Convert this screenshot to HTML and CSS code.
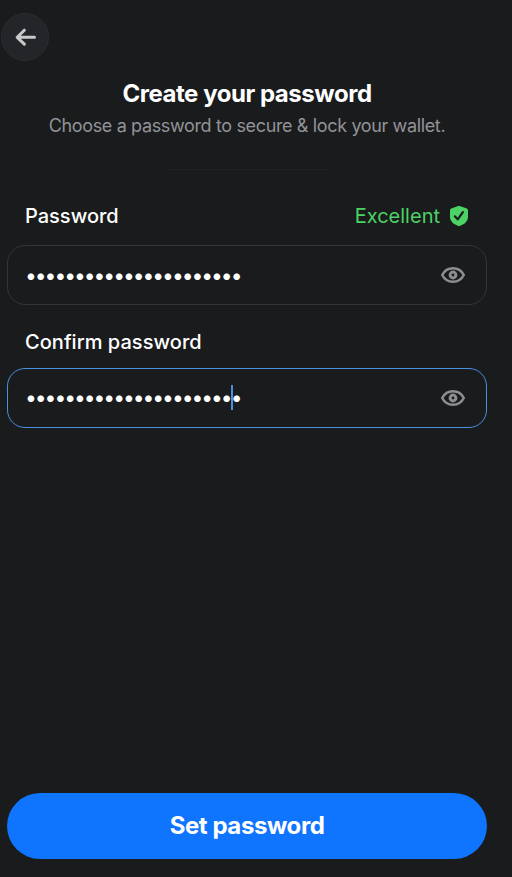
FILE: index.html
```html
<!DOCTYPE html>
<html lang="en">
<head>
<meta charset="utf-8">
<title>Create your password</title>
<link rel="stylesheet" href="styles.css">
</head>
<body>
<main class="screen">
  <button class="back" aria-label="Back">
    <svg width="22" height="18" viewBox="0 0 22 18"><path d="M19.5 9.3H2.500M9.300 2.200L2.200 9.300L9.300 16.200"/></svg>
  </button>
  <header class="intro">
    <h1 class="title">Create your password</h1>
    <p class="subtitle">Choose a password to secure &amp; lock your wallet.</p>
    <div class="divider"></div>
  </header>
  <div class="label-row">
    <span class="label">Password</span>
    <span class="strength">Excellent
      <svg width="20" height="22" viewBox="0 0 20 22"><path class="shield" d="M10 .8L17.800 3.500Q19 4 19 5.200V11.500C19 17 14.500 19.800 10 21.200C5.500 19.800 1 17 1 11.500V5.200Q1 4 2.200 3.500Z"/><path class="check" d="M5.800 11.300L8.700 14.300L13.900 7.100"/></svg>
    </span>
  </div>
  <div class="field first">
    <span class="dots">••••••••••••••••••••••</span>
    <svg class="eye" width="26" height="18" viewBox="0 0 26 18"><path d="M2.200 9C4.500 4.500 8.500 2.300 13 2.300S21.500 4.500 23.800 9C21.500 13.500 17.500 15.700 13 15.700S4.500 13.500 2.200 9Z"/><circle cx="13" cy="9" r="2.900"/></svg>
  </div>
  <div class="label-row confirm">
    <span class="label">Confirm password</span>
  </div>
  <div class="field focused">
    <span class="dots">••••••••••••••••••••••<i class="caret"></i></span>
    <svg class="eye" width="26" height="18" viewBox="0 0 26 18"><path d="M2.200 9C4.500 4.500 8.500 2.300 13 2.300S21.500 4.500 23.800 9C21.500 13.500 17.500 15.700 13 15.700S4.500 13.500 2.200 9Z"/><circle cx="13" cy="9" r="2.900"/></svg>
  </div>
  <button class="submit">Set password</button>
</main>
</body>
</html>
```
FILE: styles.css
```css
* { box-sizing: border-box; }
body { margin: 0; background: #1a1b1d; font-family: Inter, "Liberation Sans", sans-serif; color: #fff; }
.screen { width: 494px; height: 877px; padding: 13px 7px 18px; display: flex; flex-direction: column; }
.back { width: 48px; height: 48px; margin: 0 0 0 -6px; padding: 0; border: 1px solid #2b2c30; border-radius: 50%; background: #242529; display: flex; align-items: center; justify-content: center; }
.back svg { margin-left: 1px; fill: none; stroke: #c8c9cb; stroke-width: 3; stroke-linecap: round; stroke-linejoin: round; }
.intro { display: flex; flex-direction: column; align-items: center; height: 135px; padding-top: 17px; }
.title { margin: 0; font-size: 24px; line-height: 32px; font-weight: 700; letter-spacing: -0.46px; white-space: nowrap; }
.subtitle { margin: 4px 0 0; font-size: 18px; line-height: 24px; letter-spacing: -0.36px; color: #929397; white-space: nowrap; }
.divider { width: 160px; height: 1px; margin-top: 31px; background: #202123; }
.label-row { display: flex; justify-content: space-between; align-items: center; height: 40px; padding: 0 18px; font-size: 20px; }
.label { font-weight: 500; }
.confirm .label { letter-spacing: 0.04px; }
.strength { display: flex; align-items: center; gap: 9px; color: #4cd265; }
.shield { fill: #4cd265; }
.check { fill: none; stroke: #1a1b1d; stroke-width: 2.2; stroke-linecap: round; stroke-linejoin: round; }
.field { display: flex; align-items: center; justify-content: space-between; height: 60px; margin-top: 9px; padding: 0 20px 0 17px; border: 1px solid #343538; border-radius: 18px; }
.confirm { margin-top: 17px; }
.confirm + .field { margin-top: 6px; }
.focused { border-color: #4a8fe0; }
.dots { position: relative; font-size: 21px; line-height: 26px; letter-spacing: -2.02px; }
.first .dots { padding-top: 2px; }
.caret { position: absolute; left: 206px; top: 0; width: 2px; height: 25px; background: #4a8fe0; }
.eye { fill: none; stroke: #8d8e92; stroke-width: 2.5; }
.eye circle { stroke-width: 3; }
.submit { height: 66px; margin-top: auto; padding: 0 0 2px; border: 0; border-radius: 33px; background: #0f75ff; color: #fff; font-family: inherit; font-size: 24px; font-weight: 700; letter-spacing: -0.42px; }
```
